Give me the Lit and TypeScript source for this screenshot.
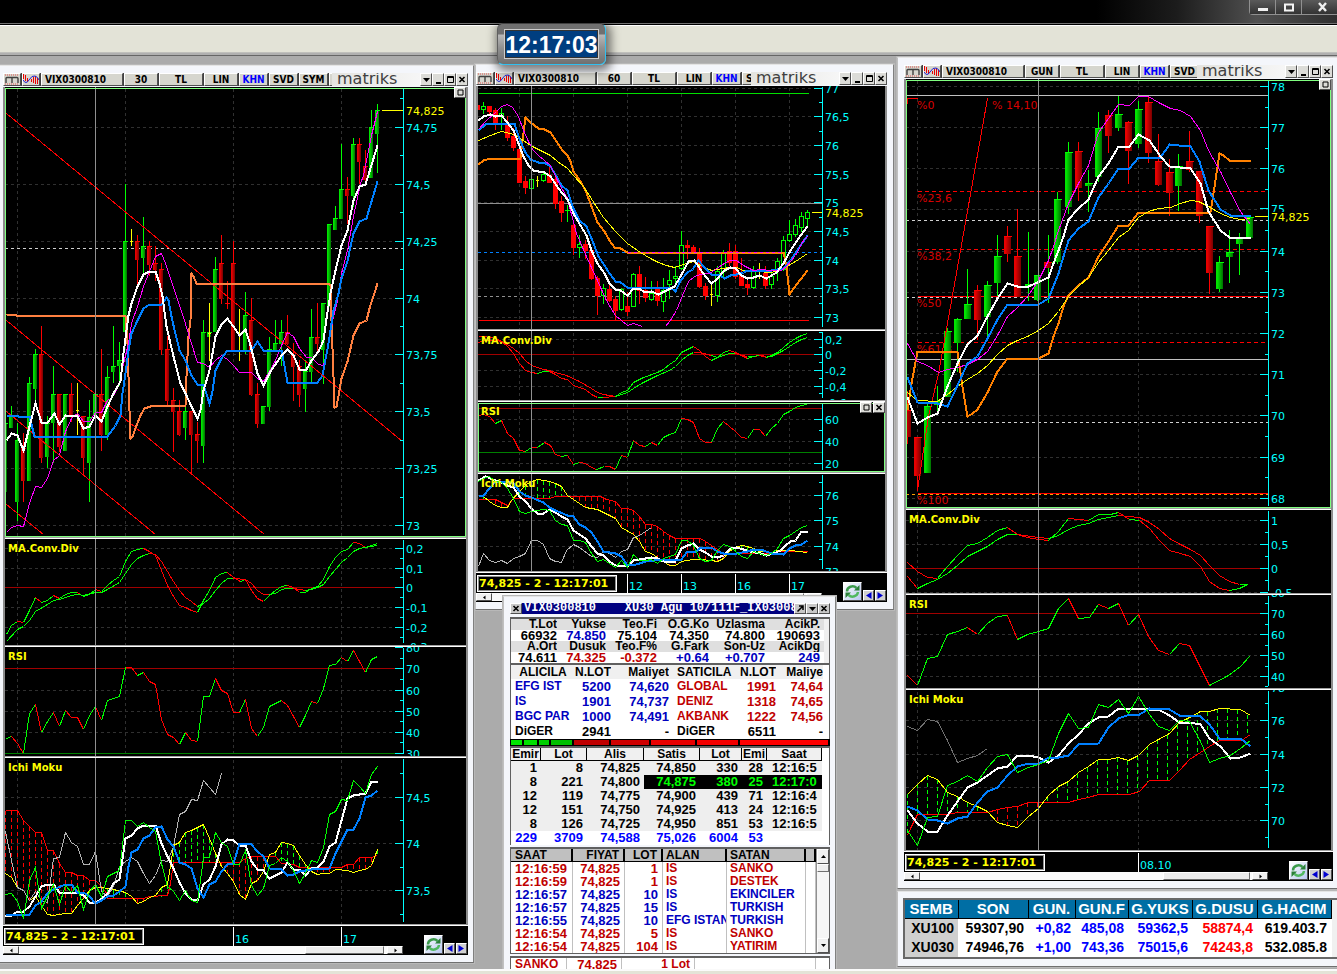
import { LitElement, html, svg, css, nothing } from "lit";
import { customElement, property } from "lit/decorators.js";

/* ---------- drawing model ---------- */

interface Origin { ox: number; oy: number; }
type Layer = (o: Origin, w: ChartSpec) => unknown;

interface PanelSpec {
  top: number;
  height: number;
  oy: number;
  title?: string;
  active?: boolean;
  caps?: string[];
  grid: number[];
  minor: number[];
  labels: [number, string][];
  price?: [number, number, number];
  layers: Layer[];
}

interface ChartSpec {
  left: number;
  width: number;
  ox: number;
  axis: number;
  cross: number;
  vgrid: number[];
  period: string;
  extras: string[];
  axisWidth: number;
  dates: [number, string][];
  thumb: [number, number];
  panels: PanelSpec[];
}

/* Series are stored in thirds of a pixel; every point lands on a pixel centre. */
const snap = (v: number, o: number) => Math.floor(v / 3) + o + 0.5;
const parse = (s: string) =>
  s.trim().split(/\s+/).map((p) => p.split(",").map(Number) as [number, number]);
const place = (s: string, o: Origin) =>
  parse(s).map(([x, y]) => `${snap(x, o.ox)},${snap(y, o.oy)}`).join(" ");

const line = (color: string, width: number, data: string, dash = "none"): Layer => (o) =>
  svg`<polyline points=${place(data, o)} fill="none" stroke=${color} stroke-width=${width} stroke-dasharray=${dash}></polyline>`;

const level = (y: number, color: string, dash = "none", from = 0, to = 0, width = 1): Layer => (o, w) =>
  svg`<line x1=${from ? snap(from, o.ox) : w.left} x2=${to ? snap(to, o.ox) : w.axis} y1=${snap(y, o.oy)} y2=${snap(y, o.oy)} stroke=${color} stroke-width=${width} stroke-dasharray=${dash}></line>`;

/* "g" and "r" switch the colour of the segments that follow. */
const trend = (data: string): Layer => (o) => {
  const out: unknown[] = [];
  let color = "#00ff00";
  let prev = "";
  let run = "";
  const flush = () => {
    if (run.includes(" ")) out.push(svg`<polyline points=${run} fill="none" stroke=${color}></polyline>`);
  };
  for (const t of data.trim().split(/\s+/)) {
    if (t === "g" || t === "r") {
      flush();
      color = t === "g" ? "#00ff00" : "#ff0000";
      run = prev;
      continue;
    }
    const [x, y] = t.split(",").map(Number);
    prev = `${snap(x, o.ox)},${snap(y, o.oy)}`;
    run = run ? `${run} ${prev}` : prev;
  }
  flush();
  return out;
};

/* x high low bodyTop bodyBottom colour */
const candles = (data: string, body: number, hollow = false): Layer => (o) =>
  data.trim().split(";").map((row) => {
    const [xs, hi, lo, bt, bb, c] = row.trim().split(/\s+/);
    const x = snap(+xs, o.ox);
    const y = (v: string) => Math.floor(+v / 3) + o.oy;
    const color = c === "g" ? "#00ff00" : c === "r" ? "#ff0000" : "#ffff00";
    const top = y(bt);
    const h = Math.max(1, y(bb) - top + 1);
    const half = Math.floor(body / 2);
    const box = hollow && c === "g" && h > 2
      ? svg`<rect x=${x - 2} y=${top + 0.5} width="4" height=${h - 1} fill="#000" stroke=${color}></rect>`
      : c === "y"
        ? svg`<rect x=${x - 1.5} y=${top} width="3" height="1" fill=${color}></rect>`
        : svg`<rect x=${x - half - 0.5} y=${top} width=${body} height=${h} fill=${hollow ? color : c === "g" ? "url(#up)" : "url(#down)"}></rect>
            ${hollow ? nothing : svg`<rect x=${x - half - 0.5} y=${top} width=${body + 1} height="1" fill=${color}></rect>`}`;
    return svg`<line x1=${x} x2=${x} y1=${y(hi)} y2=${y(lo) + 1} stroke=${color}></line>${box}`;
  });

const valueAt = (pts: [number, number][], x: number) => {
  for (let i = 1; i < pts.length; i++) {
    const [x0, y0] = pts[i - 1];
    const [x1, y1] = pts[i];
    if (x >= x0 && x <= x1) return x1 === x0 ? y1 : y0 + ((y1 - y0) * (x - x0)) / (x1 - x0);
  }
  return NaN;
};

/* Vertical hatching between the two leading spans. */
const cloud = (a: string, b: string, start: number, end: number, step: number): Layer => (o) => {
  const pa = parse(a);
  const pb = parse(b);
  const out: unknown[] = [];
  for (let x = start; x <= end; x += step) {
    const ya = valueAt(pa, x);
    const yb = valueAt(pb, x);
    if (Number.isNaN(ya) || Number.isNaN(yb) || Math.abs(ya - yb) < 9) continue;
    out.push(svg`<line x1=${snap(x, o.ox)} x2=${snap(x, o.ox)} y1=${snap(Math.min(ya, yb), o.oy)} y2=${snap(Math.max(ya, yb), o.oy)}
      stroke=${ya < yb ? "#ff0000" : "#00ff00"} stroke-dasharray="4 3"></line>`);
  }
  return [out, line("#ff0000", 1, a)(o, null as never), line("#ffff00", 1, b)(o, null as never)];
};

const note = (x: number, y: number, text: string): Layer => (o) =>
  svg`<text class="note" x=${Math.round(x / 3) + o.ox - 1} y=${Math.round(y / 3) + o.oy + 4}>${text}</text>`;

const BLUE = "#0080ff";
const WHITE = "#ffffff";
const PINK = "#ff00ff";
const ORANGE = "#ff8000";
const CORAL = "#ff8040";
const YELLOW = "#ffff00";
const LIME = "#00ff00";
const RED = "#ff0000";
const GREY = "#b4b4b4";

/* ---------- 30 minute chart ---------- */

const redA = "16,181 52,181 70,210 88,228 106,246 124,246 142,300 160,300 178,340 196,367 214,368 232,376 250,377 268,390 286,392 304,410 321,432 322,446 430,446 448,440 502,437 510,400 520,338 718,338 736,325 754,319 826,319 844,340 880,342 898,352 1024,352 1042,344 1060,342 1078,322 1114,322 1132,316";
const yelA = "16,370 34,382 52,412 70,420 88,450 106,440 124,465 142,493 160,496 196,491 214,490 232,465 250,445 268,420 286,412 304,411 340,417 376,428 394,440 412,460 430,455 448,443 466,435 484,413 502,402 510,350 520,285 538,278 556,247 574,240 592,232 610,223 628,265 646,310 664,348 682,370 700,395 718,432 736,448 754,400 772,390 790,365 808,312 826,307 844,277 862,280 880,285 898,315 916,343 934,365 952,373 970,370 988,370 1006,358 1042,360 1060,368 1078,362 1096,357 1114,345 1132,298";

const halfHour: ChartSpec = {
  left: 5, width: 461, ox: 0, axis: 403, cross: 286, vgrid: [52, 376, 700, 1024],
  period: "30", extras: ["SYM", "TEM"], axisWidth: 400, dates: [[700, "16"], [1024, "17"]], thumb: [303, 79],
  panels: [
    {
      top: 87, height: 450, oy: 60, active: true, caps: ["max"],
      grid: [202, 373, 544, 715, 883, 1054, 1225, 1396],
      minor: [115, 286, 457, 628, 799, 970, 1141, 1312],
      labels: [[202, "74,75"], [373, "74,5"], [544, "74,25"], [715, "74"], [883, "73,75"], [1054, "73,5"], [1225, "73,25"], [1396, "73"]],
      price: [151, 1143, 1206],
      layers: [
        level(565, "#d0d0d0", "3 3"),
        candles(`16 1088 1295 1090 1295 g;34 1038 1102 1070 1102 g;52 1090 1380 1140 1325 g;70 1120 1325 1165 1262 r;88 952 1260 970 1260 g;
          106 867 1030 883 985 g;124 798 1208 882 1192 r;142 1070 1222 1090 1190 g;160 918 1207 1002 1088 g;178 1002 1175 1002 1158 r;196 1002 1172 1002 1172 g;
          214 970 1085 1002 1070 r;232 970 1122 1050 1050 y;250 1070 1242 1070 1192 r;268 1020 1325 1072 1208 g;286 1003 1065 1003 1065 g;304 867 1172 1003 1123 r;
          322 918 1138 952 1122 g;340 798 968 918 935 g;358 848 975 900 917 g;376 372 815 544 815 g;394 508 557 544 544 y;412 525 680 544 597 r;430 473 640 560 593 g;
          448 543 645 560 612 r;466 560 662 610 628 r;484 610 882 628 868 r;502 830 1035 868 1020 r;520 986 1173 1020 1053 r;538 1020 1125 1053 1123 r;556 1020 1138 1053 1103 g;
          574 1053 1242 1053 1123 r;592 1088 1208 1122 1142 r;610 780 1208 817 1157 g;628 817 830 817 830 g;628 730 900 820 820 y;646 593 815 628 815 g;664 525 730 610 715 r;
          682 663 745 730 730 r;700 543 868 610 868 r;718 747 900 820 820 y;736 697 880 765 868 g;754 715 1005 780 1003 r;772 970 1103 1003 1090 r;790 1038 1090 1038 1090 g;
          808 832 1052 867 1038 g;826 780 867 850 867 g;844 780 917 817 850 g;862 765 852 817 850 r;880 850 1020 885 918 r;898 900 1038 920 1003 r;916 900 1053 935 986 g;
          934 747 970 832 935 g;952 730 870 832 850 r;970 730 970 730 868 g;988 493 740 493 740 g;1006 440 507 474 507 g;1024 252 474 388 474 g;1042 353 490 388 405 r;
          1060 235 440 252 405 g;1078 235 370 252 303 r;1096 270 372 320 357 r;1114 150 353 202 353 g;1132 132 336 151 220 g`, 4),
        line(RED, 1, "18,160 1208,1145"),
        line(RED, 1, "18,780 792,1424"),
        line(RED, 1, "18,1055 465,1424"),
        line(RED, 1, "18,1332 131,1424"),
        line(CORAL, 2, "18,764 50,765 52,767 376,767 381,850 386,950 388,1050 392,1135 398,1128 410,1095 420,1065 432,1045 450,1039 468,1035 555,1035 560,950 566,830 570,780 574,640 580,650 590,671 985,671 990,676 994,780 1000,950 1004,1041 1008,1040 1014,1010 1025,955 1041,905 1059,825 1077,790 1098,782 1108,745 1132,670"),
        line(PINK, 1, "18,1418 34,1403 52,1397 70,1399 88,1330 106,1280 125,1282 142,1255 160,1200 178,1185 188,1150 196,1115 214,1075 232,1060 250,1085 268,1085 286,1058 304,1058 322,1020 340,1010 345,995 360,965 370,910 385,850 395,790 412,740 430,680 448,635 467,590 484,580 495,610 510,655 530,710 552,780 570,840 592,907 610,910 628,923 645,900 664,887 683,897 700,915 718,936 754,938 772,955 790,963 808,935 825,900 843,855 861,818 880,830 898,865 918,892 935,892 955,913 970,916 985,850 1000,770 1012,720 1025,640 1041,570 1060,470 1080,370 1090,345 1100,300 1115,225 1132,155"),
        line(BLUE, 2, "18,1065 50,1065 54,1068 88,1068 104,1130 322,1130 345,1095 360,1065 368,1000 376,940 385,870 395,820 412,780 430,745 448,733 485,733 500,713 505,722 514,770 520,795 538,870 556,900 575,945 592,972 610,972 628,1030 636,995 645,932 664,895 683,870 754,870 772,845 790,872 843,872 848,885 861,968 952,968 968,945 985,850 1000,750 1015,700 1025,655 1041,605 1050,560 1060,520 1077,485 1098,475 1115,425 1132,365"),
        line(WHITE, 2, "18,1140 34,1120 52,1125 70,1170 88,1100 106,1030 124,1086 142,1086 162,1060 178,1093 196,1066 232,1068 250,1106 268,1098 286,1065 304,1083 322,1040 340,1000 360,965 370,880 378,810 386,765 395,730 412,680 430,643 448,633 467,633 478,670 488,710 500,800 520,890 540,970 556,1000 575,1040 592,1074 600,1050 610,990 628,930 645,830 664,792 683,774 700,800 718,825 736,807 750,855 772,940 790,975 810,935 843,885 861,869 880,885 898,927 918,927 935,900 955,875 970,840 980,775 990,700 1005,630 1023,555 1041,510 1060,420 1077,380 1097,373 1132,257"),
      ],
    },
    {
      top: 539, height: 106, oy: 535, title: "MA.Conv.Div",
      grid: [41, 100, 217, 276], minor: [70, 128, 187, 247, 306],
      labels: [[41, "0,2"], [100, "0,1"], [157, "0"], [217, "-0,1"], [276, "-0,2"], [335, "-0,3"]],
      layers: [
        level(157, "#a00000"),
        trend("g 18,297 34,272 52,259 r 70,262 g 88,225 106,187 r 124,202 g 142,195 160,180 r 178,190 g 196,178 214,172 232,172 r 250,183 g 268,178 286,162 r 304,170 g 322,150 340,137 358,125 376,78 394,50 412,42 430,40 r 448,50 466,60 484,105 502,150 520,185 538,210 556,217 574,225 592,232 g 610,195 628,165 646,128 664,116 682,112 r 700,128 720,138 g 736,133 r 754,165 772,190 790,199 g 808,180 826,165 844,154 862,151 r 880,157 898,171 g 916,171 934,160 952,155 970,133 988,95 1006,68 1024,49 1042,43 1060,22 r 1078,24 1096,37 g 1114,30 1132,25"),
        trend("g 18,320 52,283 70,274 88,257 106,229 142,208 160,196 178,192 214,182 232,178 250,182 286,172 304,171 322,162 358,142 376,115 394,88 412,70 430,60 448,55 r 466,58 484,78 502,108 520,138 538,165 556,187 574,200 592,213 g 610,205 628,190 646,165 664,145 682,130 700,130 r 736,133 754,145 772,165 790,179 808,178 g 826,174 844,164 862,160 880,160 r 898,162 916,166 g 934,163 952,157 970,148 988,125 1006,103 1024,83 1042,68 1060,50 1078,40 1096,37 1132,31"),
      ],
    },
    {
      top: 647, height: 109, oy: 535, title: "RSI",
      grid: [466, 529, 592], minor: [370, 433, 497, 560, 622],
      labels: [[338, "80"], [401, "70"], [466, "60"], [529, "50"], [592, "40"], [655, "30"]],
      layers: [
        level(401, "#a00000"), level(655, "#008000"),
        trend("g 18,611 34,604 r 52,625 70,655 g 88,535 106,508 r 124,592 g 142,560 160,532 r 178,573 g 196,526 r 214,547 232,547 250,583 g 268,540 286,515 r 304,556 g 322,497 358,484 376,397 r 394,397 412,421 g 430,412 r 448,438 466,448 484,553 502,598 520,608 538,628 g 556,592 r 574,615 592,619 g 610,484 628,484 646,430 r 664,466 682,475 700,532 718,532 g 736,493 r 754,580 772,604 g 790,578 808,514 844,497 r 862,510 880,545 898,577 g 916,540 934,498 r 952,506 g 970,460 988,391 1006,387 1024,367 r 1042,379 g 1060,346 r 1078,380 1096,411 g 1114,372 1132,363"),
      ],
    },
    {
      top: 758, height: 166, oy: 750, title: "Ichi Moku",
      grid: [142, 280, 421], minor: [70, 211, 351, 492],
      labels: [[142, "74,5"], [280, "74"], [421, "73,5"]],
      layers: [
        cloud(redA, yelA, 16, 1132, 18),
        line(GREY, 1, "16,245 34,330 52,412 70,420 88,450 106,425 124,450 142,458 160,325 178,322 196,247 214,278 232,290 250,343 268,344 286,303 304,425 322,438 340,410 358,350 376,335 394,322 412,335 430,370 448,400 466,375 484,332 502,335 520,290 538,192 556,185 574,148 592,152 610,92 628,112 646,132 664,70"),
        line(WHITE, 2, "16,498 34,496 52,484 70,484 88,468 106,440 124,410 142,403 160,402 178,428 232,428 250,435 268,458 290,458 304,445 322,430 340,400 358,388 376,266 394,255 412,235 430,226 466,226 484,280 502,318 520,355 538,398 556,430 574,448 592,452 610,402 628,388 646,350 664,282 682,268 700,272 718,285 736,287 754,335 772,357 790,362 808,386 826,375 844,368 862,337 880,357 898,357 916,375 934,355 952,352 970,335 988,290 1006,276 1024,210 1042,145 1060,135 1096,130 1114,93 1132,93"),
        line(BLUE, 2, "16,493 88,494 106,465 124,455 142,430 160,418 196,402 214,402 232,426 250,426 268,440 286,459 304,452 322,440 340,437 358,425 376,410 385,350 394,308 412,298 430,265 448,255 466,232 484,229 502,268 520,290 538,338 556,343 574,355 592,415 610,443 628,402 646,393 664,365 682,342 700,341 718,280 752,279 772,305 790,318 808,356 844,358 862,375 880,372 898,363 934,358 988,355 1006,310 1024,275 1042,237 1060,237 1078,205 1096,142 1114,137 1132,122"),
        line(LIME, 1, "16,433 34,430 52,455 70,505 88,390 106,352 124,475 142,440 160,403 178,462 196,405 214,428 232,405 250,477 268,425 286,403 304,440 322,380 358,360 376,211 394,212 412,230 430,218 448,232 466,245 484,340 502,410 520,425 538,452 556,422 574,450 592,457 610,322 628,322 646,248 664,277 682,290 700,342 718,344 736,302 754,405 772,437 790,415 808,345 826,340 844,323 862,335 880,362 898,400 916,370 934,332 952,338 970,293 988,192 1006,185 1024,148 1042,152 1060,92 1078,110 1096,130 1114,72 1132,48"),
      ],
    },
  ],
};

/* ---------- 60 minute chart ---------- */

const redB = "24,313 76,313 94,322 112,330 130,310 238,310 256,304 390,304 410,312 436,318 454,340 472,340 490,346 508,365 526,388 545,388 562,395 580,408 598,422 616,430 690,430 706,440 724,450 742,463 760,475 910,475 925,468 1013,469";
const yelB = "24,303 40,303 58,318 76,332 94,337 112,337 124,315 148,290 170,268 184,258 202,253 238,258 256,265 274,275 292,300 310,313 346,337 382,344 436,370 454,397 490,418 508,440 526,470 544,475 562,487 580,500 598,510 616,511 634,500 670,493 688,492 724,497 742,498 760,490 778,470 800,455 820,452 850,460 868,470 904,472 920,465 960,465 985,470 1013,472";

const hourly: ChartSpec = {
  left: 478, width: 407, ox: 470, axis: 822, cross: 184, vgrid: [148, 310, 472, 634, 796, 958],
  period: "60", extras: [], axisWidth: 346, dates: [[472, "12"], [634, "13"], [796, "16"], [958, "17"]], thumb: [312, 17],
  panels: [
    {
      top: 86, height: 243, oy: 0,
      grid: [265, 349, 436, 523, 608, 694, 781, 865, 952],
      minor: [307, 394, 479, 565, 651, 738, 823, 910],
      labels: [[265, "77"], [349, "76,5"], [436, "76"], [523, "75,5"], [608, "75"], [694, "74,5"], [781, "74"], [865, "73,5"], [952, "73"]],
      price: [637, 1023, 1053],
      layers: [
        level(280, "#00e000", "none", 24, 1014),
        level(610, "#909090"),
        level(757, BLUE, "3 3"),
        level(889, "#909090", "3 3"),
        level(961, RED, "none", 24, 1014),
        candles(`22 315 327 315 327 r;40 306 340 319 327 g;58 318 340 318 335 r;76 325 387 332 370 r;94 325 387 340 350 g;112 348 420 372 411 r;130 385 450 408 441 r;
          148 440 548 447 546 r;166 530 580 544 563 r;184 525 580 538 566 g;202 530 558 541 541 y;220 515 543 523 540 g;238 500 548 525 546 r;256 525 625 538 610 r;
          274 590 665 605 636 r;292 617 663 632 632 g;310 665 763 675 743 r;328 705 772 733 742 g;346 720 775 732 752 r;364 745 838 750 836 r;382 830 942 835 885 r;
          400 852 910 865 885 g;418 855 905 868 900 r;436 890 958 897 930 r;454 865 930 868 928 g;472 878 947 918 935 r;490 820 920 823 919 g;508 800 910 823 870 r;
          526 832 905 870 893 r;544 845 900 880 898 g;562 845 915 868 902 r;580 835 933 870 905 g;598 810 895 840 853 g;616 800 850 830 836 g;634 693 808 737 806 g;
          652 720 775 735 743 r;670 735 760 741 757 r;688 745 862 757 860 r;706 850 898 858 885 r;724 850 915 883 883 y;742 800 903 815 885 g;760 750 830 757 815 g;
          778 730 795 755 787 r;796 735 835 755 830 r;814 775 857 825 855 r;832 840 882 852 863 r;850 800 865 815 862 g;868 790 835 812 812 y;886 800 865 820 855 r;
          904 820 865 830 852 g;922 775 840 783 812 g;940 710 812 720 808 g;958 662 725 703 722 g;976 658 710 677 703 g;994 636 695 650 683 g;1012 632 680 638 656 g`, 5, true),
        line(ORANGE, 2, "24,494 40,480 60,474 150,474 158,420 165,352 182,367 205,386 222,387 240,398 258,425 278,452 292,465 300,485 310,515 330,545 345,570 365,620 382,667 402,695 418,720 434,743 452,745 472,758 940,758 948,800 958,883 970,865 990,838 1013,811"),
        level(757, PINK, "3 3", 472, 940),
        line(YELLOW, 1, "24,422 60,405 95,394 132,402 150,415 182,436 240,465 262,483 292,505 310,526 340,560 368,600 400,652 436,693 472,730 510,757 540,775 565,787 590,797 614,802 640,792 670,785 690,797 724,811 775,803 800,803 820,811 860,813 905,818 940,806 975,785 1013,760"),
        line(BLUE, 2, "24,390 45,373 62,369 132,369 140,392 150,425 165,458 182,478 205,488 225,490 240,500 258,530 275,555 292,572 302,600 310,625 328,660 348,680 365,715 385,770 402,795 418,820 436,845 452,847 472,861 600,861 615,875 632,840 652,818 668,808 686,782 700,800 725,822 745,823 762,835 780,825 800,823 820,818 832,810 905,810 940,806 960,780 985,745 1013,706"),
        line(PINK, 1, "24,388 50,360 80,335 95,320 112,314 128,322 145,350 160,390 175,425 190,452 205,465 240,497 262,540 292,595 300,630 320,700 350,770 380,835 410,900 436,945 455,962 472,976 490,970 518,980"),
        line(PINK, 1, "586,980 600,960 618,932 636,885 655,845 672,830 690,823 718,820 745,803 765,787 780,781 800,780 820,795 850,810 875,807 900,812 935,812 950,800 975,765 1000,720 1013,708"),
        line(WHITE, 2, "24,362 40,348 60,344 75,350 95,346 108,365 130,390 145,430 160,470 175,495 190,510 205,515 222,517 240,530 265,565 292,597 310,640 330,675 348,705 365,750 382,790 402,820 418,850 436,868 452,870 472,887 490,865 505,866 525,876 545,875 565,883 590,872 612,860 630,828 655,785 672,780 690,808 705,830 724,850 740,837 762,810 780,803 795,806 815,825 832,834 850,832 868,827 888,835 920,817 940,790 960,750 985,715 1013,680"),
      ],
    },
    {
      top: 331, height: 69, oy: 190, title: "MA.Conv.Div",
      grid: [448, 541, 589], minor: [426, 471, 518, 565, 610],
      labels: [[448, "0,2"], [493, "0"], [541, "-0,2"], [589, "-0,4"], [636, "-0,6"]],
      layers: [
        level(493, "#a00000"),
        trend("g 24,440 r 40,440 76,445 94,455 112,463 130,475 148,490 166,512 184,525 202,533 220,537 238,540 256,546 290,555 328,575 364,595 382,607 400,613 436,619 g 454,612 472,606 490,595 520,577 562,557 598,540 616,528 634,512 652,495 670,486 r 688,487 724,497 g 742,503 760,495 778,490 796,491 r 814,495 832,500 g 850,498 r 870,496 888,500 g 905,500 922,490 940,480 958,468 976,458 994,448 1012,442"),
        trend("g 24,456 r 40,450 76,452 94,455 112,470 130,490 148,520 166,541 184,548 202,551 g 220,545 238,543 r 256,552 274,566 292,567 310,585 346,597 364,612 382,623 g 400,622 r 436,620 g 454,608 472,602 490,577 520,562 562,548 580,538 598,522 616,512 634,487 652,477 670,468 r 688,482 706,500 724,511 g 742,502 760,488 778,481 r 796,486 814,496 832,505 g 850,500 868,497 r 888,502 g 905,496 922,488 940,472 958,458 976,445 994,435 1012,430"),
      ],
    },
    {
      top: 402, height: 70, oy: 395, title: "RSI", active: true, caps: ["max", "close"],
      grid: [73, 139, 205], minor: [106],
      labels: [[73, "60"], [139, "40"], [205, "20"]],
      layers: [
        level(40, "#a00000"), level(172, "#008000"),
        trend("g 24,62 r 40,57 58,65 76,84 g 94,76 r 112,115 130,130 148,165 166,170 g 184,157 r 202,157 g 222,142 r 240,152 256,178 274,184 g 292,181 r 310,208 g 328,202 r 346,204 364,218 380,224 g 402,213 r 418,215 436,223 g 454,180 r 472,188 g 490,135 r 508,150 526,154 g 544,143 r 562,152 g 580,126 598,118 616,113 634,70 r 652,72 670,82 688,130 706,142 724,142 g 742,100 760,79 r 778,94 796,110 814,126 832,130 g 850,103 r 868,103 886,123 g 904,100 922,86 940,58 958,48 976,38 994,30 1012,27"),
      ],
    },
    {
      top: 474, height: 97, oy: 395, title: "Ichi Moku",
      grid: [301, 376, 454], minor: [263, 340, 415, 492],
      labels: [[301, "76"], [376, "75"], [454, "74"], [528, "73"]],
      layers: [
        cloud(redB, yelB, 22, 1012, 18),
        line(GREY, 1, "24,515 40,476 58,497 76,503 94,496 112,506 130,490 148,483 166,475 184,437 202,437 220,447 238,490 256,500 274,502 290,465 310,448 328,456 364,485 382,488 400,470 418,475 436,487 454,470 472,462 490,428 508,420 544,398"),
        line(WHITE, 2, "24,255 45,244 60,250 94,262 112,270 130,278 148,305 166,320 184,340 202,354 220,354 238,343 256,353 274,365 292,372 310,407 328,418 346,430 364,455 382,475 400,480 418,500 436,511 472,513 490,497 508,492 544,487 562,490 580,500 612,502 634,460 652,450 670,446 688,462 706,473 724,483 742,487 760,480 780,460 800,457 840,468 870,475 890,480 910,475 930,465 945,450 960,440 975,435 994,409 1013,408"),
        line(BLUE, 2, "24,302 40,302 58,280 75,260 94,258 112,258 130,265 148,290 166,302 184,308 220,322 238,337 256,345 292,362 310,365 328,388 346,398 364,412 382,440 400,468 436,475 454,485 472,510 500,508 526,499 580,493 634,492 652,468 680,468 690,458 724,457 742,468 760,475 800,476 832,468 850,463 880,465 905,475 940,477 958,460 975,450 994,447 1013,437"),
        line(LIME, 1, "24,260 40,250 58,245 76,258 94,262 112,280 130,310 148,348 166,354 184,348 202,345 220,342 238,347 256,375 274,387 292,390 310,435 328,435 346,442 364,475 382,500 400,493 418,505 436,518 454,497 472,516 490,478 508,497 526,497 544,492 562,505 580,490 616,478 634,436 652,437 670,450 688,490 706,500 724,495 742,465 760,447 778,455 796,470 814,485 832,490 850,468 886,480 904,475 922,460 940,430 958,422 976,408 994,397 1013,391"),
      ],
    },
  ],
};

/* ---------- daily chart ---------- */

const redC = "36,1005 50,980 66,943 157,943 187,937 278,937 308,928 338,922 368,918 400,907 520,907 550,898 580,892 610,883 702,883 732,873 762,842 823,842 853,812 883,777 915,757 943,740 973,722 1040,720 1065,703";
const yelC = "36,882 66,852 97,826 128,838 157,877 187,890 217,907 248,919 278,935 308,966 338,976 368,982 400,950 430,926 460,885 490,858 520,843 550,817 580,800 610,779 640,779 670,771 700,781 730,765 762,732 790,718 823,701 853,668 883,652 915,634 943,634 973,625 1035,629 1065,647";

const daily: ChartSpec = {
  left: 906, width: 425, ox: 895, axis: 1268, cross: 430, vgrid: [67, 730],
  period: "GUN", extras: [], axisWidth: 364, dates: [[730, "08.10"]], thumb: [260, 87],
  panels: [
    {
      top: 79, height: 429, oy: 0, active: true, caps: ["max"],
      grid: [259, 382, 505, 628, 753, 877, 1000, 1123, 1247, 1372, 1495],
      minor: [322, 445, 568, 690, 814, 937, 1063, 1186, 1309, 1432],
      labels: [[259, "78"], [382, "77"], [505, "76"], [626, "75"], [753, "74"], [877, "73"], [1000, "72"], [1123, "71"], [1247, "70"], [1372, "69"], [1495, "68"]],
      price: [650, 1077, 1116],
      layers: [
        level(287, "#c0c0c0"),
        level(575, RED, "4 3", 67), level(748, RED, "4 3", 67), level(1027, RED, "4 3", 67),
        level(889, RED, "none", 67), level(892, "#d0d0d0", "3 3"),
        level(661, "#d0d0d0", "3 3"), level(1267, "#d0d0d0", "3 3"),
        level(1078, "#c0c0c0"),
        level(1480, RED, "none", 67), level(1483, "#ffa000", "3 3"),
        line(RED, 1, "36,310 38,296 66,296"),
        note(69, 316, "%0"), note(294, 316, "% 14,10"), note(69, 595, "%23,6"), note(69, 768, "%38,2"),
        note(69, 910, "%50"), note(69, 1047, "%61,8"), note(69, 1500, "%100"),
        candles(`37 1173 1330 1230 1310 r;67 1311 1470 1311 1427 r;97 1213 1418 1218 1418 g;127 1160 1235 1205 1212 g;157 985 1190 993 1190 g;187 955 1115 958 1028 g;
          217 807 955 912 955 g;247 855 1017 870 958 r;277 845 1015 855 950 g;307 705 885 768 846 g;337 678 783 708 760 r;367 627 890 770 888 r;400 698 900 852 858 g;
          427 825 900 825 897 g;460 705 908 788 788 g;457 788 803 788 803 r;487 578 790 598 783 g;520 426 640 457 618 g;550 428 600 453 563 r;580 510 633 550 555 g;
          610 336 545 385 530 g;640 330 456 345 407 r;670 288 392 342 381 g;700 365 550 366 452 r;730 305 443 327 430 g;760 293 486 306 458 r;790 402 555 483 553 r;
          823 478 645 518 577 r;850 462 632 500 557 g;883 393 515 483 508 r;912 513 668 514 647 r;942 678 880 678 817 r;973 768 873 786 864 g;1003 690 848 757 770 g;
          1033 700 822 711 731 g;1063 651 711 651 711 g`, 7),
        line(RED, 1, "277,294 197,750 130,1120 100,1250 68,1472"),
        line(ORANGE, 2, "36,1230 50,1150 66,1053 187,1053 200,1140 217,1249 232,1240 248,1228 278,1178 308,1115 338,1074 430,1074 460,1060 475,1010 490,970 505,920 520,885 550,855 580,832 610,770 640,725 670,675 700,675 730,638 945,638 955,580 972,461 985,467 1002,480 1065,481"),
        line(YELLOW, 1, "36,1178 66,1201 128,1204 157,1182 187,1160 217,1138 248,1120 278,1095 308,1062 338,1036 368,1022 398,1008 430,990 460,970 490,933 520,888 550,858 580,832 610,788 640,752 670,712 700,690 730,652 760,635 790,626 825,622 855,610 885,601 910,604 940,620 975,640 1005,653 1035,659 1065,655"),
        line(PINK, 1, "36,1030 66,1085 97,1095 130,1118 157,1108 187,1103 217,1092 248,1078 278,1055 308,1005 338,950 368,922 398,890 430,842 460,780 475,740 490,690 520,610 550,550 580,497 610,398 640,355 670,314 702,317 730,288 760,290 790,308 825,325 855,331 885,350 915,392 940,450 975,515 1005,578 1035,633 1065,672"),
        line(BLUE, 2, "36,1132 66,1208 128,1210 157,1218 187,1155 217,1090 248,1070 278,1015 308,958 338,912 430,912 460,895 490,820 505,770 520,720 550,685 580,663 610,593 640,550 670,504 702,504 730,471 795,471 823,434 850,436 885,438 912,485 940,570 975,628 1005,645 1065,646"),
        line(WHITE, 2, "36,1192 66,1270 97,1252 128,1240 157,1160 187,1090 217,1033 248,1005 278,950 308,895 338,851 368,860 400,860 460,832 475,790 490,750 505,710 520,658 550,625 580,598 610,528 640,490 670,440 702,440 730,404 762,422 795,470 823,500 885,504 915,550 940,635 975,690 1002,711 1065,711"),
      ],
    },
    {
      top: 510, height: 83, oy: 500, title: "MA.Conv.Div",
      grid: [61, 133, 277], minor: [97, 169, 241],
      labels: [[61, "1"], [133, "0,5"], [205, "0"], [277, "-0,5"]],
      layers: [
        level(205, "#a00000"),
        trend("r 38,188 66,215 97,232 128,236 g 157,200 187,165 217,136 248,130 278,113 308,92 338,82 r 368,103 398,112 430,118 460,121 g 490,95 520,55 r 580,62 g 610,44 645,43 670,37 r 702,58 g 732,60 r 762,85 792,122 823,152 855,160 885,170 915,200 943,243 973,265 1003,272 g 1033,265 1058,252"),
        trend("r 38,228 66,265 g 97,250 128,238 157,220 187,195 217,170 248,153 278,138 308,118 338,103 368,103 r 430,112 460,116 g 490,105 520,88 550,75 580,70 610,57 670,46 r 700,50 732,52 762,68 792,87 823,115 855,133 885,149 915,167 943,197 973,225 1003,245 1033,254 g 1058,252"),
      ],
    },
    {
      top: 595, height: 93, oy: 500, title: "RSI",
      grid: [404, 467, 529], minor: [310, 373, 435, 499, 560],
      labels: [[278, "80"], [341, "70"], [404, "60"], [467, "50"], [529, "40"]],
      layers: [
        level(340, "#a00000"),
        trend("r 38,525 66,557 g 97,476 128,470 157,404 187,395 217,382 r 248,402 g 278,370 308,350 338,346 r 368,418 g 398,404 430,394 460,384 490,325 520,296 r 550,355 g 582,351 610,313 r 640,325 g 670,309 r 700,376 g 730,343 r 760,410 790,451 823,463 g 853,430 r 883,436 943,556 g 1000,525 1035,498 1064,468"),
      ],
    },
    {
      top: 690, height: 160, oy: 500, title: "Ichi Moku",
      grid: [661, 763, 862, 961], minor: [611, 711, 811, 912, 1012],
      labels: [[561, "78"], [661, "76"], [763, "74"], [862, "72"], [961, "70"]],
      layers: [
        cloud(redC, yelC, 37, 1062, 30),
        line("#707070", 1, "38,680 66,691 97,658 128,665 157,722 187,788 217,776 248,765 278,745"),
        line(WHITE, 2, "38,932 66,970 97,993 128,993 157,945 187,905 217,862 248,848 278,827 308,805 338,800 368,765 400,765 430,772 460,787 490,765 520,730 550,702 580,670 610,651 640,650 670,625 730,625 762,628 790,627 823,645 853,668 883,668 915,673 943,715 975,740 1005,774 1035,773 1065,761"),
        line(BLUE, 2, "36,920 66,932 97,958 128,961 157,969 187,955 217,950 248,908 278,875 308,862 338,827 368,800 400,790 430,789 460,773 490,771 520,765 550,732 610,730 640,682 670,655 702,643 732,642 762,624 823,627 853,645 912,645 943,673 973,714 1035,715 1065,738"),
        line(LIME, 1, "38,990 66,1035 97,952 128,948 157,857 187,845 217,826 248,845 278,802 308,770 338,764 368,818 400,803 430,793 460,780 490,700 520,641 550,685 580,683 610,614 640,622 670,597 700,640 730,590 762,642 790,680 823,692 853,660 883,665 915,725 943,787 973,775 1005,765 1035,745 1065,722"),
      ],
    },
  ],
};

/* ---------- shared glyphs ---------- */

const glyphs: Record<string, unknown> = {
  menu: svg`<path d="M1 3h7L4.500 7z"></path>`,
  min: svg`<path d="M2 7h5v2H2z"></path>`,
  max: svg`<path d="M1.500 1.500h6v6h-6zM1 2.500h7" fill="none" stroke="#000"></path>`,
  small: svg`<path d="M2 2h5v5H2z" fill="none" stroke="#000"></path>`,
  close: svg`<path d="M1.500 2l5 5M6.500 2l-5 5" stroke="#000" stroke-width="1.600"></path>`,
  pop: svg`<path d="M1.500 7.500l5-5M3 2h4v4" fill="none" stroke="#000" stroke-width="1.500"></path>`,
  left: svg`<path d="M5.500 2.500v4L3 4.500z"></path>`,
  right: svg`<path d="M3.500 2.500v4L6 4.500z"></path>`,
  up: svg`<path d="M2 6h5L4.500 3z"></path>`,
  down: svg`<path d="M2 3h5L4.500 6z"></path>`,
  prev: svg`<path d="M7.500 1v7L2 4.500z" fill="#0000d0"></path>`,
  next: svg`<path d="M1.500 1v7L7 4.500z" fill="#0000d0"></path>`,
};
const glyph = (name: string) => html`<svg class="glyph" viewBox="0 0 9 9" width="9" height="9" aria-hidden="true">${glyphs[name]}</svg>`;

const buttonStyles = css`
  * { box-sizing: border-box; }
  button {
    padding: 0;
    margin: 0;
    font: inherit;
    color: inherit;
    border-radius: 0;
    display: flex;
    align-items: center;
    justify-content: center;
    overflow: hidden;
    white-space: nowrap;
    background: #dcdcd8;
    border: 1px solid;
    border-color: #fff #505050 #505050 #fff;
  }
  .glyph { display: block; flex: none; }
`;

/* ---------- chart window ---------- */

@customElement("chart-window")
export class ChartWindow extends LitElement {
  @property({ attribute: false }) spec!: ChartSpec;

  static styles = [
    buttonStyles,
    css`
      :host { display: block; font-family: "DejaVu Sans", Verdana, sans-serif; font-size: 11px; }
      .bar {
        display: flex;
        height: 13px;
        background: #404040;
        font: bold 10px/11px "DejaVu Sans Condensed", "DejaVu Sans", sans-serif;
        overflow: hidden;
      }
      .tools { display: flex; flex: 1; min-width: 0; overflow: hidden; gap: 1px; }
      .tools button { flex: none; height: 13px; background: #d6d6ce; }
      .icon { width: 18px; }
      .name { width: 82px; justify-content: flex-start; padding-left: 3px; }
      .w34 { width: 34px; }
      .w44 { width: 44px; }
      .w29 { width: 29px; }
      .on { color: #0000ff; }
      .logo {
        flex: none;
        width: 88px;
        height: 13px;
        padding-left: 5px;
        background: linear-gradient(90deg, #e4e4e0, #f6f6f6);
        color: #404040;
        font: 16px/12px "DejaVu Sans", sans-serif;
      }
      .sys { width: 12px; height: 13px; flex: none; }
      .panels { margin-top: 1px; border: solid #8c8c8c; border-width: 0 2px; background: #8c8c8c; }
      .panel { position: relative; border-top: 1px solid #fff; border-bottom: 1px solid #a0a0a0; }
      .panel:first-child { border-top: 0; }
      .panel > svg { display: block; background: #000; shape-rendering: crispEdges; width: 100%; }
      .caps { position: absolute; top: 0; right: 0; display: flex; gap: 1px; }
      .caps button { width: 12px; height: 11px; }
      .tick { fill: #00ffff; font-size: 11px; }
      .price { fill: #ffff00; font-size: 11px; }
      .title { fill: #ffff00; font-size: 10px; font-weight: bold; }
      .note { fill: #d80000; font-size: 11px; }
      .foot { display: flex; justify-content: space-between; height: 30px; background: #000; border-top: 1px solid #fff; }
      .time { display: flex; flex-direction: column; justify-content: space-between; position: relative; }
      .time > svg { display: block; shape-rendering: crispEdges; }
      .last {
        position: absolute;
        top: 2px;
        left: 1px;
        height: 17px;
        padding: 0 1px;
        border: 1px solid #fff;
        outline: 1px solid #909090;
        outline-offset: -2px;
        background: #000;
        color: #ffff00;
        font-weight: bold;
        font-size: 11px;
        line-height: 15px;
        min-width: 140px;
        white-space: nowrap;
      }
      .scroll { display: flex; height: 8px; margin-bottom: 1px; background: #fafafa; }
      .scroll button { width: 16px; flex: none; background: #f0f0f0; }
      .track { flex: 1; display: flex; }
      .thumb { background: #ececec; border: 1px solid; border-color: #fff #707070 #707070 #fff; }
      .nav { display: flex; align-items: flex-end; gap: 1px; padding: 0 1px 1px 0; }
      .nav button { width: 11px; height: 11px; background: #d0d0d0; }
      .nav .fresh { width: 19px; height: 19px; background: linear-gradient(135deg, #fff, #b8c8f0); }
    `,
  ];

  private panel(p: PanelSpec) {
    const w = this.spec;
    const o: Origin = { ox: w.ox, oy: p.oy };
    const bottom = p.top + p.height;
    const ax = w.axis + 0.5;
    const cx = snap(w.cross, w.ox);
    return html`<div class="panel">
      <svg viewBox="${w.left} ${p.top} ${w.width} ${p.height}" height=${p.height} role="img" aria-label=${p.title ?? "VIX0300810"}>
        <defs>
          <linearGradient id="up"><stop offset="0.2" stop-color="#00e400"></stop><stop offset="1" stop-color="#007000"></stop></linearGradient>
          <linearGradient id="down"><stop offset="0.2" stop-color="#e80000"></stop><stop offset="1" stop-color="#780000"></stop></linearGradient>
        </defs>
        ${w.vgrid.map((x) => svg`<line x1=${snap(x, w.ox)} x2=${snap(x, w.ox)} y1=${p.top + 2} y2=${bottom} stroke="#303030" stroke-dasharray="3 3"></line>`)}
        ${p.grid.map((y) => level(y, "#303030", "3 3")(o, w))}
        ${p.layers.map((l) => l(o, w))}
        <line x1=${cx} x2=${cx} y1=${p.top} y2=${bottom} stroke="#909090"></line>
        <line x1=${ax} x2=${ax} y1=${p.top + 1} y2=${bottom - 2} stroke="#00ffff"></line>
        ${p.minor.map((y) => svg`<line x1=${w.axis - 3} x2=${w.axis} y1=${snap(y, p.oy)} y2=${snap(y, p.oy)} stroke="#00ffff"></line>`)}
        ${p.labels.map(([y, t]) => svg`<line x1=${w.axis - 8} x2=${w.axis} y1=${snap(y, p.oy)} y2=${snap(y, p.oy)} stroke="#00ffff"></line>
          <text class="tick" x=${w.axis + 3} y=${Math.floor(y / 3) + p.oy + 5}>${t}</text>`)}
        ${p.price
          ? svg`<rect x=${w.axis + 2} y=${Math.floor(p.price[0] / 3) + p.oy - 4} width="40" height="9" fill="#000"></rect>
              <line x1=${snap(p.price[1], w.ox)} x2=${snap(p.price[2], w.ox)} y1=${snap(p.price[0], p.oy)} y2=${snap(p.price[0], p.oy)} stroke="#ffff00"></line>
              <text class="price" x=${w.axis + 3} y=${Math.floor(p.price[0] / 3) + p.oy + 5}>74,825</text>`
          : nothing}
        ${p.title ? svg`<text class="title" x=${w.left + 3} y=${p.top + 13}>${p.title}</text>` : nothing}
        ${p.active ? svg`<rect x=${w.left + 0.5} y=${p.top + 1.5} width=${w.width - 1} height=${p.height - 2} fill="none" stroke="#80ff80"></rect>` : nothing}
      </svg>
      ${p.caps ? html`<div class="caps">${p.caps.map((c) => html`<button type="button" aria-label=${c}>${glyph(c === "max" ? "small" : c)}</button>`)}</div>` : nothing}
    </div>`;
  }

  render() {
    const w = this.spec;
    const start = w.left - 2;
    return html`
      <div class="bar">
        <div class="tools">
          <button class="icon" type="button" aria-label="Matriks">
            <svg class="glyph" viewBox="0 0 16 11" width="16" height="11"><path d="M1 1h14M1 10h14" stroke="#e05050" stroke-dasharray="1 1"></path><path d="M2 9V4.500Q2 3.500 3 3.500H13Q14 3.500 14 4.500V9M8 3.500V9" fill="none" stroke="#404040" stroke-width="1.400"></path></svg>
          </button>
          <button class="icon" type="button" aria-label="Gösterge">
            <svg class="glyph" viewBox="0 0 16 11" width="16" height="11"><path d="M.5 0v5M2.500 1v6M4.500 4v4M8.500 5v3M10.500 3v6M12.500 2v8M14.500 4v6" stroke="#e80000"></path><path d="M0 6Q3 11 6 6T12 2T16 6" fill="none" stroke="#2020d0"></path></svg>
          </button>
          <button class="name" type="button">VIX0300810</button>
          <button class="w34" type="button">${w.period}</button>
          <button class="w44" type="button">TL</button>
          <button class="w34" type="button">LIN</button>
          <button class="w29 on" type="button">KHN</button>
          <button class="w29" type="button">SVD</button>
          ${w.extras.map((t) => html`<button class="w29" type="button">${t}</button>`)}
        </div>
        <div class="logo">matriks</div>
        ${["menu", "min", "max", "close"].map((g) => html`<button class="sys" type="button" aria-label=${g}>${glyph(g)}</button>`)}
      </div>
      <div class="panels">${w.panels.map((p) => this.panel(p))}</div>
      <div class="foot">
        <div class="time" style="width:${w.axisWidth}px">
          <svg viewBox="${start} 0 ${w.axisWidth} 20" width=${w.axisWidth} height="20">
            ${w.dates.map(([x, t]) => svg`<line x1=${snap(x, w.ox)} x2=${snap(x, w.ox)} y1="1" y2="20" stroke="#fff"></line>
              <text class="tick" x=${Math.floor(x / 3) + w.ox + 2} y="17">${t}</text>`)}
          </svg>
          <div class="last">74,825 - 2 - 12:17:01</div>
          <div class="scroll">
            <button type="button" aria-label="Geri">${glyph("left")}</button>
            <div class="track"><div class="thumb" style="margin-left:${w.thumb[0] - 17}px;width:${w.thumb[1]}px"></div></div>
            <button type="button" aria-label="İleri">${glyph("right")}</button>
          </div>
        </div>
        <div class="nav">
          <button class="fresh" type="button" aria-label="Yenile">
            <svg class="glyph" viewBox="0 0 17 17" width="17" height="17"><path d="M3 8.500A5.500 5 0 0 1 12.500 5" fill="none" stroke="#3a9a4a" stroke-width="2.500"></path><path d="M10 7.500h5.500V2z" fill="#2a8038"></path><path d="M14 9A5.500 5 0 0 1 4.500 12" fill="none" stroke="#50b860" stroke-width="2.500"></path><path d="M7 9.500H1.500V15z" fill="#2a8038"></path></svg>
          </button>
          <button type="button" aria-label="Önceki">${glyph("prev")}</button>
          <button type="button" aria-label="Sonraki">${glyph("next")}</button>
        </div>
      </div>
    `;
  }
}

/* ---------- depth and trades window ---------- */

type Cell = [string, string];

@customElement("depth-window")
export class DepthWindow extends LitElement {
  static styles = [
    buttonStyles,
    css`
      :host { display: block; font: bold 12px/13px "Liberation Sans", Arial, sans-serif; color: #000; }
      .head { display: flex; height: 11px; background: #000080; }
      .head button { width: 12px; flex: none; height: 11px; background: #c8c8c8; }
      .cap { flex: 1; min-width: 0; overflow: hidden; white-space: pre; color: #fff; font: bold 12px/11px "Liberation Mono", monospace; padding-left: 2px; }
      .box { border: solid #606060; border-width: 2px 1px 0; background: #fff; }
      .summary { margin-top: 3px; background: #f0f0f0; }
      table { border-collapse: separate; border-spacing: 0; table-layout: fixed; }
      td, th { padding: 0; text-align: right; font-weight: bold; white-space: nowrap; overflow: hidden; }
      .num { font-size: 13px; }
      .l { text-align: left; }
      .blue { color: #0000c0; }
      .red { color: #c00000; }
      .sum { width: 313px; background: #fff; line-height: 11px; }
      .sum tr { height: 11px; }
      .sum .h { background: #dfdfdf; }
      .sum th:last-child, .sum td:last-child { padding-right: 4px; }
      .brokers { width: 312px; line-height: 15px; }
      .brokers th { background: #f0f0f0; line-height: 14px; }
      .brokers .l { padding-left: 4px; }
      .brokers th.l { text-align: center; }
      .brokers .s { padding-left: 8px; }
      .brokers th.s { text-align: left; }
      .meter { display: flex; gap: 2px; height: 7px; padding: 1px 2px 1px 1px; background: #000; }
      .seg { min-width: 0; }
      .orders { width: 311px; line-height: 14px; }
      .orders td { background: #eeeeee; padding-right: 4px; }
      .orders th { background: #f0f0f0; border: solid #000; border-width: 0 1px 1px 0; line-height: 12px; text-align: center; }
      .orders .hit { background: #000; color: #00ff00; }
      .orders .tot td { background: #fff; color: #0000ff; height: 14px; }
      .orders td:last-child { text-align: left; padding: 0 0 0 5px; }
      .trades { display: flex; margin-top: 2px; border-bottom: 1px solid #606060; }
      .deals { flex: none; width: 305px; line-height: 13px; }
      .deals th { background: #c0c0c0; border: solid #000; border-width: 0 2px 1px 0; line-height: 12px; }
      .deals td { border-right: 1px solid #c0c0c0; }
      .deals td, .deals th { padding: 0 4px; }
      .deals td:nth-child(4), .deals td:nth-child(5), .deals th:nth-child(4), .deals th:nth-child(5) { padding: 0 0 0 3px; }
      .deals th:last-child, .deals td:last-child { padding: 0; }
      .vbar { flex: 1; display: flex; flex-direction: column; background: #f6f6f6; border-left: 1px solid #909090; }
      .vbar button { height: 15px; background: #f0f0f0; flex: none; }
      .vbar .grip { height: 8px; background: #eeeeee; border: 1px solid; border-color: #fff #707070 #707070 #fff; }
      .gap { flex: 1; }
      .extra { margin-top: 2px; }
    `,
  ];

  private row(cells: Cell[]) {
    return cells.map(([t, c]) => html`<td class=${c}>${t}</td>`);
  }

  render() {
    const brokers: Cell[][] = [
      [["EFG IST", "l blue"], ["5200", "num blue"], ["74,620", "num blue"], ["GLOBAL", "l s red"], ["1991", "num red"], ["74,64", "num red"]],
      [["IS", "l blue"], ["1901", "num blue"], ["74,737", "num blue"], ["DENIZ", "l s red"], ["1318", "num red"], ["74,65", "num red"]],
      [["BGC PAR", "l blue"], ["1000", "num blue"], ["74,491", "num blue"], ["AKBANK", "l s red"], ["1222", "num red"], ["74,56", "num red"]],
      [["DiGER", "l"], ["2941", "num"], ["-", "num"], ["DiGER", "l s"], ["6511", "num"], ["-", "num"]],
    ];
    const orders = [
      ["1", "8", "74,825", "74,850", "330", "28", "12:16:5"],
      ["8", "221", "74,800", "74,875", "380", "25", "12:17:0"],
      ["12", "119", "74,775", "74,900", "439", "71", "12:16:4"],
      ["12", "151", "74,750", "74,925", "413", "24", "12:16:5"],
      ["8", "126", "74,725", "74,950", "851", "53", "12:16:5"],
    ];
    const deals = [
      ["12:16:59", "74,825", "1", "IS", "SANKO", "red"],
      ["12:16:59", "74,825", "1", "IS", "DESTEK", "red"],
      ["12:16:57", "74,825", "10", "IS", "EKINCILER", "blue"],
      ["12:16:57", "74,825", "15", "IS", "TURKISH", "blue"],
      ["12:16:55", "74,825", "10", "EFG ISTANBUL", "TURKISH", "blue"],
      ["12:16:54", "74,825", "5", "IS", "SANKO", "red"],
      ["12:16:54", "74,825", "104", "IS", "YATIRIM", "red"],
    ];
    const meter: [number, string][] = [
      [11, "#00e800"], [13, "#00e000"], [10, "#00d000"], [21, "#00c000"],
      [34, "#c00000"], [38, "#d00000"], [44, "#e80000"], [41, "#f40000"], [87, "#ff0000"],
    ];
    return html`
      <div class="head">
        <button type="button" aria-label="Kapat">${glyph("close")}</button>
        <div class="cap">VIX0300810    XU30 Agu 10/111F_IX0300810</div>
        <button type="button" aria-label="Aç">${glyph("pop")}</button>
        <button type="button" aria-label="Menü">${glyph("menu")}</button>
        <button type="button" aria-label="Pencereyi kapat">${glyph("close")}</button>
      </div>
      <div class="box summary">
        <table class="sum">
          <colgroup><col style="width:46px"><col style="width:49px"><col style="width:51px"><col style="width:52px"><col style="width:56px"><col style="width:59px"></colgroup>
          <tr class="h"><th>T.Lot</th><th>Yukse</th><th>Teo.Fi</th><th>O.G.Ko</th><th>Uzlasma</th><th>AcikP.</th></tr>
          <tr class="num">${this.row([["66932", ""], ["74.850", "blue"], ["75.104", ""], ["74.350", ""], ["74.800", ""], ["190693", ""]])}</tr>
          <tr class="h"><th>A.Ort</th><th>Dusuk</th><th>Teo.F%</th><th>G.Fark</th><th>Son-Uz</th><th>AcikDg</th></tr>
          <tr class="num">${this.row([["74.611", ""], ["74.325", "red"], ["-0.372", "red"], ["+0.64", "blue"], ["+0.707", "blue"], ["249", "blue"]])}</tr>
        </table>
      </div>
      <div class="box">
        <table class="brokers">
          <colgroup><col style="width:60px"><col style="width:40px"><col style="width:58px"><col style="width:64px"><col style="width:43px"><col style="width:47px"></colgroup>
          <tr><th class="l">ALICILA</th><th>N.LOT</th><th>Maliyet</th><th class="s">SATICILA</th><th>N.LOT</th><th>Maliye</th></tr>
          ${brokers.map((b) => html`<tr>${this.row(b)}</tr>`)}
        </table>
      </div>
      <div class="meter">${meter.map(([w, c]) => html`<div class="seg" style="flex:${w} 1 0;background:${c}"></div>`)}</div>
      <div class="box">
        <table class="orders">
          <colgroup><col style="width:30px"><col style="width:46px"><col style="width:57px"><col style="width:56px"><col style="width:42px"><col style="width:25px"><col style="width:55px"></colgroup>
          <tr><th>Emir</th><th>Lot</th><th>Alis</th><th>Satis</th><th>Lot</th><th>Emi</th><th>Saat</th></tr>
          ${orders.map((r, i) => html`<tr class="num">${r.map((c, j) => html`<td class=${i === 1 && j > 2 ? "hit" : ""}>${c}</td>`)}</tr>`)}
          <tr class="num tot">${["229", "3709", "74,588", "75,026", "6004", "53", ""].map((c) => html`<td>${c}</td>`)}</tr>
        </table>
      </div>
      <div class="box trades">
        <table class="deals">
          <colgroup><col style="width:62px"><col style="width:52px"><col style="width:38px"><col style="width:64px"><col style="width:79px"><col style="width:10px"></colgroup>
          <tr><th class="l">SAAT</th><th>FIYAT</th><th>LOT</th><th class="l">ALAN</th><th class="l">SATAN</th><th></th></tr>
          ${deals.map((d) => html`<tr class=${d[5]}><td class="num l">${d[0]}</td><td class="num">${d[1]}</td><td class="num">${d[2]}</td><td class="l">${d[3]}</td><td class="l">${d[4]}</td><td></td></tr>`)}
        </table>
        <div class="vbar">
          <button type="button" aria-label="Yukarı">${glyph("up")}</button>
          <div class="grip"></div>
          <div class="gap"></div>
          <button type="button" aria-label="Aşağı">${glyph("down")}</button>
        </div>
      </div>
      <div class="box extra">
        <table class="deals">
          <colgroup><col style="width:56px"><col style="width:55px"><col style="width:73px"><col></colgroup>
          <tr class="red"><td class="l">SANKO</td><td class="num">74,825</td><td>1 Lot</td><td></td></tr>
        </table>
      </div>
    `;
  }
}

/* ---------- page ---------- */

@customElement("app-root")
export class AppRoot extends LitElement {
  static styles = [
    buttonStyles,
    css`
      :host {
        display: flex;
        flex-direction: column;
        height: 100vh;
        overflow: hidden;
        position: relative;
        background: #ababab;
        font-family: "Liberation Sans", Arial, sans-serif;
      }
      .titlebar {
        display: flex;
        justify-content: flex-end;
        height: 25px;
        flex: none;
        background: linear-gradient(90deg, #000 0 82%, #1c1c1c 88%, #505050 94%, #303030 100%);
        border-bottom: 1px solid #000;
        box-shadow: inset 0 -1px #707070;
      }
      .controls { display: flex; height: 15px; border: solid #909090; border-width: 0 0 1px 1px; border-radius: 0 0 0 4px; }
      .controls button { width: 26px; height: 14px; background: linear-gradient(#5a5a5a, #333); border: 0; border-right: 1px solid #909090; }
      .controls button:last-child { width: 35px; border-right: 0; padding-left: 6px; }
      .menubar { height: 28px; flex: none; background: #e3e3d7; border-top: 1px solid #fff; border-bottom: 1px solid #c0c0bc; }
      .rule { height: 3px; flex: none; background: #b0b0b0; border-bottom: 1px solid #666; }
      .desk { flex: 1; position: relative; min-height: 0; overflow: hidden; }
      .status { height: 5px; flex: none; background: #e3e3d7; border-top: 2px solid #fafafa; }
      .win { position: absolute; background: #f4f6fb; border: 1px solid; border-color: #e4e4e4 #808080 #707070 #c0c0c0; box-shadow: 0 0 0 1px #b8b8b8; }
      .half { left: -3px; top: 9px; width: 477px; padding: 7px 5px 7px 5px; }
      .hour { left: 475px; top: 8px; width: 419px; padding: 7px 6px 7px 0; }
      .day { left: 897px; top: 1px; width: 442px; padding: 7px 5px 7px 6px; }
      .depth { left: 503px; top: 540px; width: 333px; padding: 6px 5px 0 6px; bottom: 0; overflow: hidden; border-bottom: 0; }
      .quotes { left: 897px; top: 835px; width: 442px; height: 76px; padding: 6px 1px 0 5px; }
      .clock {
        position: absolute;
        left: 497px;
        top: 23px;
        width: 109px;
        height: 42px;
        padding: 5px 6px;
        border-radius: 6px;
        border: 1px solid;
        border-color: #404040 #30c0f0 #30c0f0 #606060;
        background: linear-gradient(#707070 0 10px, #b8b8b8 11px, #909090 60%, #707070);
        box-shadow: 2px 3px 10px 3px rgba(0, 0, 0, 0.5);
      }
      time {
        display: block;
        height: 30px;
        border: 1px solid #ccc;
        outline: 1px solid #333;
        outline-offset: -2px;
        background: #003e80;
        color: #fff;
        font: bold 23px/30px "Liberation Sans", Arial, sans-serif;
        text-align: center;
      }
      .frame { border: 2px solid #686868; border-right: 0; background: #f0f0f0; height: 61px; overflow: hidden; }
      table { border-collapse: collapse; table-layout: fixed; width: 426px; font: bold 14px/19px "Liberation Sans", Arial, sans-serif; background: #fff; }
      th { height: 18px; padding: 0; background: #006ea4; color: #fff; font: bold 15px/17px "Liberation Sans", Arial, sans-serif; border: solid #000; border-width: 0 1px 1px 0; overflow: hidden; white-space: nowrap; }
      td { padding: 0 4px 0 0; height: 19px; text-align: right; color: #000; white-space: nowrap; overflow: hidden; }
      td:first-child { background: #cfcfcf; }
      .blue { color: #0000ff; }
      .red { color: #ff0000; }
    `,
  ];

  render() {
    const rows = [
      ["XU100", "59307,90", "+0,82", "485,08", "59362,5", "58874,4", "619.403.7"],
      ["XU030", "74946,76", "+1,00", "743,36", "75015,6", "74243,8", "532.085.8"],
    ];
    const tone = ["", "", "blue", "blue", "blue", "red", ""];
    return html`
      <header class="titlebar">
        <div class="controls">
          <button type="button" aria-label="Simge durumuna küçült"><svg class="glyph" viewBox="0 0 12 9" width="12" height="9"><path d="M1 5h10v3H1z" fill="#f0f0f0"></path></svg></button>
          <button type="button" aria-label="Önceki boyut"><svg class="glyph" viewBox="0 0 12 9" width="12" height="9"><path d="M2 1.500h8v6H2z" fill="none" stroke="#f4f4f4" stroke-width="2"></path></svg></button>
          <button type="button" aria-label="Kapat"><svg class="glyph" viewBox="0 0 12 10" width="12" height="10"><path d="M2 1l7 8M9 1L2 9" stroke="#f0f0f0" stroke-width="2.400"></path></svg></button>
        </div>
      </header>
      <div class="menubar"></div>
      <div class="rule"></div>
      <main class="desk">
        <section class="win half"><chart-window .spec=${halfHour}></chart-window></section>
        <section class="win hour"><chart-window .spec=${hourly}></chart-window></section>
        <section class="win day"><chart-window .spec=${daily}></chart-window></section>
        <section class="win depth"><depth-window></depth-window></section>
        <section class="win quotes">
          <div class="frame">
            <table>
              <colgroup><col style="width:53px"><col style="width:70px"><col style="width:47px"><col style="width:53px"><col style="width:64px"><col style="width:65px"><col style="width:74px"></colgroup>
              <thead><tr>${["SEMB", "SON", "GUN.", "GUN.F", "G.YUKS", "G.DUSU", "G.HACIM"].map((h) => html`<th>${h}</th>`)}</tr></thead>
              <tbody>${rows.map((r) => html`<tr>${r.map((c, i) => html`<td class=${tone[i]}>${c}</td>`)}</tr>`)}</tbody>
            </table>
          </div>
        </section>
      </main>
      <footer class="status"></footer>
      <div class="clock"><time>12:17:03</time></div>
    `;
  }
}
